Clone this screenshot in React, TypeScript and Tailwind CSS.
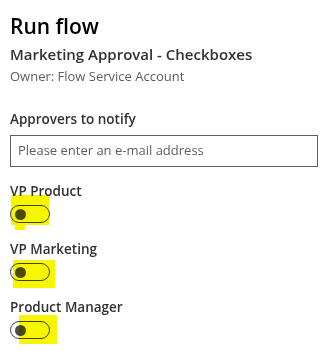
import React from 'react';

const approvers = [
  {
    label: 'VP Product',
    marks: ['left-[1px] -top-[10px] w-[38px] h-[30px]', 'left-[5px] top-[20px] w-[10px] h-[5px]'],
  },
  {
    label: 'VP Marketing',
    marks: ['left-[3px] -top-[3px] w-[42px] h-[28px]'],
  },
  {
    label: 'Product Manager',
    marks: ['left-[9px] -top-[6px] w-[38px] h-[29px]'],
  },
];

const Toggle: React.FC<{ marks: string[] }> = ({ marks }) => (
  <div className="relative w-[40px] h-[18px]">
    <div className="w-[40px] h-[18px] rounded-full border border-[#444] bg-white flex items-center pl-[4px]">
      <div className="w-[11px] h-[11px] rounded-full bg-[#4f4d4b]" />
    </div>
    {/* маркер-выделение поверх переключателя */}
    {marks.map((m, i) => (
      <div key={i} className={`absolute ${m} bg-[#f8f500] mix-blend-multiply`} />
    ))}
  </div>
);

export default function App() {
  return (
    <div
      className="w-[327px] h-[351px] bg-white pl-[10px] pr-[9px] pt-[12px] text-[#323130] overflow-hidden"
      style={{ fontFamily: '"Open Sans", "Noto Sans", sans-serif' }}
    >
      <h1 className="text-[21px] leading-[28px] font-semibold text-black">Run flow</h1>
      <h2 className="mt-[4px] text-[15px] leading-[20px] font-semibold">Marketing Approval - Checkboxes</h2>
      <p className="mt-[3px] text-[13px] leading-[18px] text-[#605e5c]">Owner: Flow Service Account</p>

      <div className="mt-[25px] text-[13.5px] leading-[18px] font-semibold">Approvers to notify</div>
      <div className="mt-[7px] h-[32px] border border-[#605e5c] flex items-center px-[7px] text-[13px] text-[#605e5c]">
        Please enter an e-mail address
      </div>

      <div className="mt-[15px] flex flex-col gap-[17px]">
        {approvers.map((a) => (
          <div key={a.label} className="flex flex-col gap-[5px]">
            <div className="text-[13.5px] leading-[18px] font-semibold">{a.label}</div>
            <Toggle marks={a.marks} />
          </div>
        ))}
      </div>
    </div>
  );
}
